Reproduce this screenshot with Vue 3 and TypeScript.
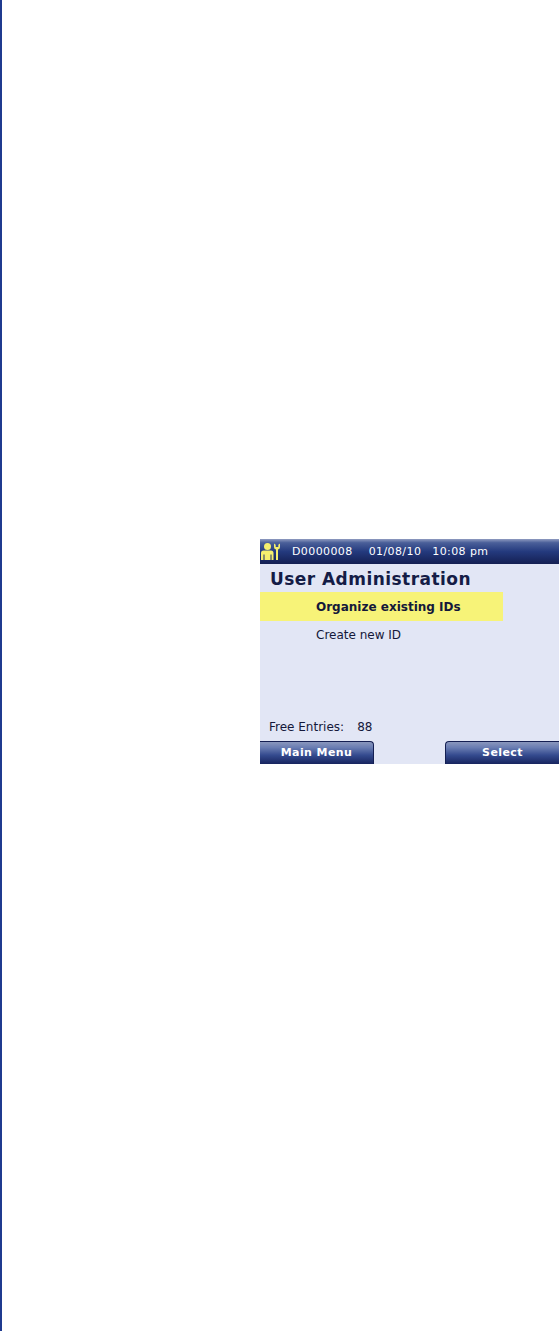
<template>
  <div class="page">
    <div class="stripe"></div>
    <div class="screen">
      <div class="top-bar">
        <svg class="admin-icon" width="20" height="19" viewBox="0 0 20 19">
          <circle cx="6.5" cy="4.5" r="3.5" fill="#f5ef6e" />
          <path d="M0 18V11Q0 8.500 2.500 8.500H10Q12.500 8.500 12.500 11V18H10.500V12.500H9.500V18H3.500V12.500H2.500V18Z" fill="#f5ef6e" />
          <path d="M13 1.500V5Q13 7 15 7.500V18H17V7.500Q19 7 19 5V1.500L17.300 2.800V5H14.700V2.800Z" fill="#f5ef6e" />
        </svg>
        <span class="device-id">{{ deviceId }}</span>
        <span class="date">{{ date }}</span>
        <span class="time">{{ time }}</span>
      </div>
      <div class="content">
        <h1 class="title">User Administration</h1>
        <ul class="menu">
          <li
            v-for="item in items"
            :key="item.label"
            :class="['menu-item', { selected: item.selected }]"
          >
            {{ item.label }}
          </li>
        </ul>
        <div class="free-entries">
          <span>Free Entries:</span>
          <span>{{ freeEntries }}</span>
        </div>
      </div>
      <div class="soft-keys">
        <div class="soft-key left">Main Menu</div>
        <div class="soft-key right">Select</div>
      </div>
    </div>
  </div>
</template>

<script setup lang="ts">
interface MenuItem {
  label: string;
  selected?: boolean;
}

const deviceId = 'D0000008';
const date = '01/08/10';
const time = '10:08 pm';
const freeEntries = 88;

const items: MenuItem[] = [
  { label: 'Organize existing IDs', selected: true },
  { label: 'Create new ID' }
];
</script>

<style>
html,
body {
  margin: 0;
  background: #fff;
}
</style>

<style scoped>
.page {
  width: 559px;
  height: 1331px;
  display: flex;
  background: #fff;
  overflow: hidden;
  font-family: "DejaVu Sans", Verdana, sans-serif;
}

.stripe {
  width: 2px;
  flex-shrink: 0;
  background: #1f3a8f;
}

.screen {
  width: 299px;
  height: 225px;
  margin: 539px 0 0 258px;
  display: flex;
  flex-direction: column;
  background: #e2e6f5;
}

.top-bar {
  height: 25px;
  display: flex;
  align-items: center;
  flex-shrink: 0;
  background: linear-gradient(#8f9bc0 0, #4a5f99 15%, #243a7e 50%, #141f52 100%);
  color: #fff;
  font-size: 11px;
  letter-spacing: 0.4px;
}

.admin-icon {
  margin-left: 1px;
  flex-shrink: 0;
}

.device-id {
  margin-left: 11px;
}

.date {
  margin-left: 16px;
}

.time {
  margin-left: 11px;
}

.content {
  flex: 1;
  display: flex;
  flex-direction: column;
  min-height: 0;
}

.title {
  margin: 5px 0 0 10px;
  font-size: 17px;
  line-height: 20px;
  font-weight: 700;
  letter-spacing: 0.45px;
  color: #141c46;
}

.menu {
  list-style: none;
  margin: 3px 0 0;
  padding: 0;
}

.menu-item {
  width: 187px;
  height: 29px;
  padding-left: 56px;
  font-size: 12px;
  line-height: 29px;
  color: #14183a;
}

.selected {
  background: #f7f378;
  font-weight: 700;
  line-height: 31px;
}

.free-entries {
  margin: auto 0 7px 9px;
  display: flex;
  gap: 13px;
  font-size: 12px;
  line-height: 14px;
  color: #14183a;
}

.soft-keys {
  height: 23px;
  display: flex;
  justify-content: space-between;
  flex-shrink: 0;
}

.soft-key {
  width: 114px;
  box-sizing: border-box;
  border-top: 1px solid #141f52;
  background: linear-gradient(#8a97bd 0, #6a7db2 25%, #344a8e 60%, #17245e 100%);
  color: #fff;
  font-size: 11px;
  font-weight: 700;
  letter-spacing: 0.4px;
  line-height: 22px;
  text-align: center;
}

.left {
  border-top-right-radius: 4px;
  border-right: 1px solid #141f52;
}

.right {
  border-top-left-radius: 4px;
  border-left: 1px solid #141f52;
}
</style>
